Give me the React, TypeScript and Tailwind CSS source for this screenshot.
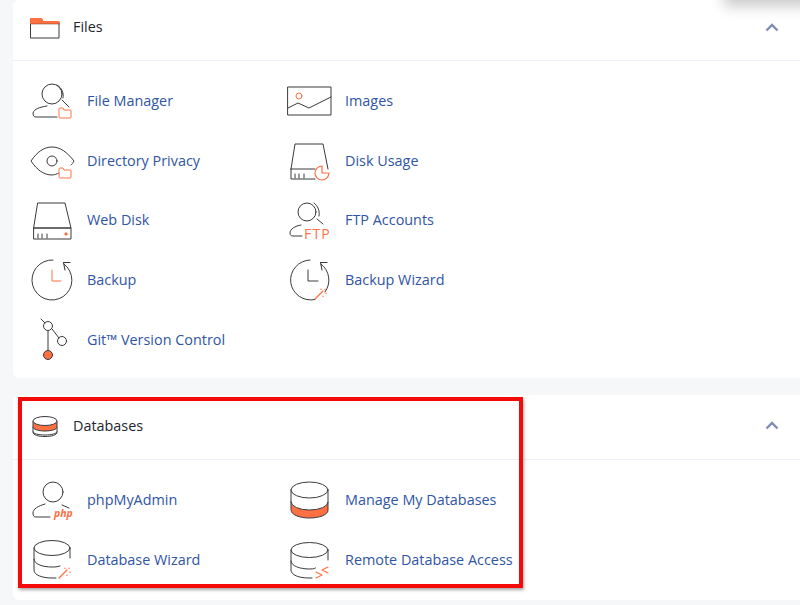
import type { ReactNode } from "react";

const INK = "#3a3a3c";
const ORANGE = "#ff7043";

function Icon({ children }: { children: ReactNode }) {
  return (
    <svg
      width="46"
      height="46"
      viewBox="0 0 46 46"
      fill="none"
      stroke={INK}
      strokeWidth="1"
      strokeLinecap="round"
      strokeLinejoin="round"
      className="shrink-0 overflow-visible"
    >
      {children}
    </svg>
  );
}

function SmallFolder({ y }: { y: number }) {
  return (
    <path
      d={`M31 ${y + 1}q0-1 1-1h3l1 2h6q1 0 1 1v6q0 1-1 1H32q-1 0-1-1z`}
      stroke={ORANGE}
      fill="#fff"
    />
  );
}

function Wand({ x, y }: { x: number; y: number }) {
  return (
    <g stroke={ORANGE}>
      <path d={`M${x} ${y + 9}l8-8`} strokeWidth="1.300" />
      <path
        d={`M${x + 6} ${y - 1}v.5M${x + 10} ${y - 1}v.5M${x + 11} ${y + 3}v.5M${x + 8} ${y + 6}v.5`}
        strokeWidth="1.200"
      />
    </g>
  );
}

const icons: Record<string, ReactNode> = {
  fileManager: (
    <Icon>
      <circle cx="24" cy="16" r="10" />
      <path d="M29 7c5 3 7 8 6 13M34 22l7 7" />
      <path d="M19 28C12 29 6 31 5 35c0 3 1 4 3 4h21" />
      <SmallFolder y={30} />
    </Icon>
  ),
  directoryPrivacy: (
    <Icon>
      <path d="M43 27c1-1 2-2 3-4C39 14 32 9 24 9S9 14 3 23c6 9 13 14 21 14 2 0 5-1 7-2" />
      <circle cx="24" cy="23" r="5" />
      <SmallFolder y={30} />
    </Icon>
  ),
  webDisk: (
    <Icon>
      <path d="M10 6h27l6 25H6z" />
      <rect x="6" y="31" width="37" height="11" />
      <path d="M10 37v4M14 37v4M19 37v4" />
      <circle cx="38" cy="37" r="1.200" fill={ORANGE} stroke={ORANGE} />
    </Icon>
  ),
  backup: (
    <Icon>
      <path d="M25 3A20 20 0 1 0 36 7" />
      <path d="M37 13l-1.500-7.500H42" strokeWidth="1.100" />
      <path d="M24 13v11h9" stroke={ORANGE} />
    </Icon>
  ),
  git: (
    <Icon>
      <path d="M13 2l4 4M20 14v20M24 12l7 9" />
      <circle cx="20" cy="9" r="4.500" />
      <circle cx="34" cy="24" r="4.500" />
      <circle cx="20" cy="38" r="4.500" fill={ORANGE} />
    </Icon>
  ),
  images: (
    <Icon>
      <rect x="2" y="9" width="43" height="28" />
      <circle cx="13" cy="18" r="3" stroke={ORANGE} />
      <path d="M2 30l10-5 11 5 22-11" />
    </Icon>
  ),
  diskUsage: (
    <Icon>
      <path d="M5 31L9 6h28l5 25" />
      <path d="M5 31v10h24M5 31h24" />
      <path d="M9 36v4M13 36v4M18 36v4" />
      <path d="M36 28a7 7 0 1 0 7 7h-7z" stroke={ORANGE} strokeWidth="1.200" fill="#fff" />
    </Icon>
  ),
  ftp: (
    <Icon>
      <circle cx="21" cy="15" r="9" />
      <path d="M28 6c4 3 6 8 5 13M31 22l6 5" />
      <path d="M15 28C9 29 4 32 4 36c0 2 1 3 3 3h9" />
      <text
        x="18"
        y="42"
        fill={ORANGE}
        stroke="none"
        fontSize="14"
        letterSpacing="1.200"
        fontFamily="'Open Sans', sans-serif"
      >
        FTP
      </text>
    </Icon>
  ),
  backupWizard: (
    <Icon>
      <path d="M24 3A20 20 0 1 0 29 42.500M39 35A20 20 0 0 0 35 7" />
      <path d="M36 13l-1.500-7.500H41" strokeWidth="1.100" />
      <path d="M22 13v11h10" />
      <Wand x={29} y={33} />
    </Icon>
  ),
  phpMyAdmin: (
    <Icon>
      <circle cx="25" cy="15" r="10" />
      <path d="M17 27C10 29 5 32 5 36c0 3 1 4 3 4h14M34 28l7 3" />
      <text
        x="26"
        y="39.500"
        fill={ORANGE}
        stroke="none"
        fontSize="10.500"
        fontWeight="700"
        fontStyle="italic"
        fontFamily="'Open Sans', sans-serif"
      >
        php
      </text>
    </Icon>
  ),
  manageDatabases: (
    <Icon>
      <path d="M5 25a18.500 8 0 0 0 37 0v8c0 5-9 8-18.500 8S5 38 5 33z" fill={ORANGE} />
      <ellipse cx="23.500" cy="13" rx="18.500" ry="8" />
      <path d="M5 13v12M42 13v12" />
    </Icon>
  ),
  databaseWizard: (
    <Icon>
      <ellipse cx="24" cy="11" rx="18" ry="7.500" />
      <path d="M6 11v22c0 5 8 8 18 8h4M42 11v10M6 22c0 5 8 8 18 8 3 0 5 0 8-1" />
      <Wand x={31} y={32} />
    </Icon>
  ),
  remoteDatabase: (
    <Icon>
      <ellipse cx="23.500" cy="13" rx="18.500" ry="7.500" />
      <path d="M5 13v20c0 5 8 8 18 8h3M42 13v10M5 24c0 5 9 8 18.500 8 2 0 4 0 6-1" />
      <path d="M30 35l6 3-6 3M42 30l-6 3 6 3" stroke={ORANGE} strokeWidth="1.100" />
    </Icon>
  ),
};

const filesItems = [
  { label: "File Manager", icon: "fileManager" },
  { label: "Images", icon: "images" },
  { label: "Directory Privacy", icon: "directoryPrivacy" },
  { label: "Disk Usage", icon: "diskUsage" },
  { label: "Web Disk", icon: "webDisk" },
  { label: "FTP Accounts", icon: "ftp" },
  { label: "Backup", icon: "backup" },
  { label: "Backup Wizard", icon: "backupWizard" },
  { label: "Git™ Version Control", icon: "git" },
];

const databaseItems = [
  { label: "phpMyAdmin", icon: "phpMyAdmin" },
  { label: "Manage My Databases", icon: "manageDatabases" },
  { label: "Database Wizard", icon: "databaseWizard" },
  { label: "Remote Database Access", icon: "remoteDatabase" },
];

function FolderHeaderIcon() {
  return (
    <svg width="32" height="24" viewBox="0 0 32 24" fill="none" stroke={INK} strokeLinejoin="round">
      <path d="M1.500 4h11l2 3h15.500v16H1.500z" fill="#fff" />
      <path d="M1 3h11.500l2 3H30.500v3H1z" fill={ORANGE} stroke="none" />
      <path d="M1.500 9h29" strokeDasharray="1 1" stroke="#7a3418" />
    </svg>
  );
}

function DatabaseHeaderIcon() {
  return (
    <svg width="32" height="24" viewBox="0 0 32 24" fill="none" stroke={INK}>
      <path d="M4 8v6c0 2 5 4 12 4s12-2 12-4V8z" fill={ORANGE} />
      <ellipse cx="16" cy="8" rx="12" ry="4.500" fill="#fff" />
      <path d="M4 14v5c0 3 5 4.500 12 4.500S28 22 28 19v-5M4 18.500c0 2 5 3.500 12 3.500s12-1.500 12-3.500" />
    </svg>
  );
}

function Section({
  title,
  icon,
  headerClass,
  bodyClass,
  items,
}: {
  title: string;
  icon: ReactNode;
  headerClass: string;
  bodyClass: string;
  items: { label: string; icon: string }[];
}) {
  return (
    <section className="rounded-l-md bg-white">
      <div className={`flex items-center border-b border-[#eef0f7] pl-[16px] pr-[21px] ${headerClass}`}>
        {icon}
        <h2 className="ml-[12px] flex-1 text-[14.400px] text-[#23262f]">{title}</h2>
        <svg width="14" height="9" viewBox="0 0 14 9" fill="none" stroke="#7f8db3" strokeWidth="2.400">
          <path d="M1.500 7.500L7 2l5.500 5.500" />
        </svg>
      </div>
      <div className={`grid grid-cols-[258px_258px] pl-[15px] ${bodyClass}`}>
        {items.map((item) => (
          <a key={item.label} className="flex h-[59.700px] items-center text-[14.400px] text-[#2f55a4]">
            {icons[item.icon]}
            <span className="ml-[13px] whitespace-nowrap">{item.label}</span>
          </a>
        ))}
      </div>
    </section>
  );
}

export default function App() {
  return (
    <div className="relative h-[605px] w-[800px] overflow-hidden bg-[#f6f7f9] pl-[13px] font-['Open_Sans',sans-serif]">
      <Section
        title="Files"
        icon={<FolderHeaderIcon />}
        headerClass="h-[61px] pb-[6px]"
        bodyClass="pt-[10px] pb-[9px]"
        items={filesItems}
      />
      <div className="mt-[17px]">
        <Section
          title="Databases"
          icon={<DatabaseHeaderIcon />}
          headerClass="h-[65px] pb-[4px]"
          bodyClass="pt-[10px] pb-[10px]"
          items={databaseItems}
        />
      </div>

      {/* callout drawn over the screenshot */}
      <div className="absolute left-[18px] top-[397px] h-[191px] w-[505px] border-[4px] border-[#f50a0a] shadow-[1px_2px_3px_rgba(0,0,0,0.35)]" />
      {/* edge of a dropdown cut off by the top of the page */}
      <div className="absolute -top-[6px] left-[730px] h-[6px] w-[80px] bg-[#888] shadow-[0_0_14px_6px_rgba(0,0,0,0.22)]" />
    </div>
  );
}
